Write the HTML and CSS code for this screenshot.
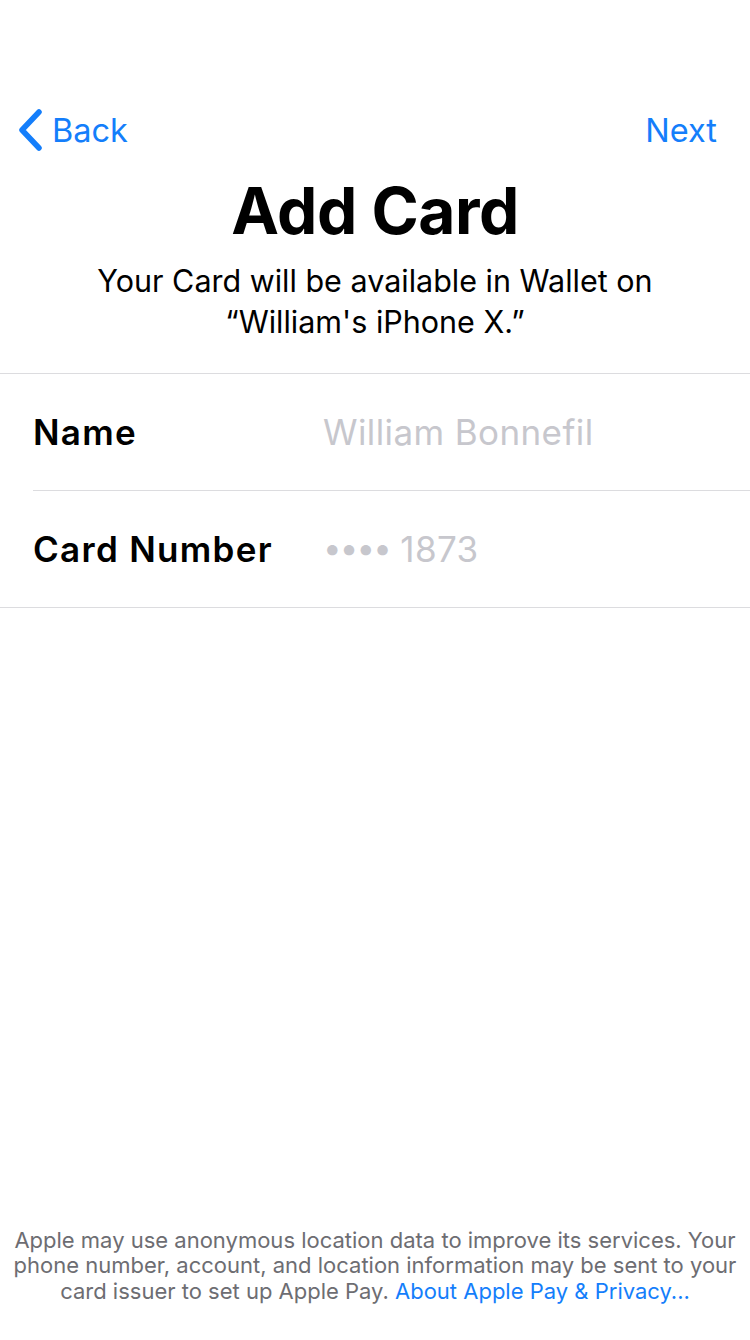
FILE: index.html
```html
<!DOCTYPE html>
<html>
<head>
<meta charset="utf-8">
<link rel="stylesheet" href="styles.css">
</head>
<body>
<div class="screen">
  <header class="nav">
    <a class="nav-back">
      <svg class="chevron" width="26" height="42" viewBox="0 0 26 42"><path d="M22 3 L5 21 L22 39" fill="none" stroke="#147EFB" stroke-width="5.5" stroke-linecap="round" stroke-linejoin="round"/></svg>
      <span>Back</span>
    </a>
    <a class="nav-next">Next</a>
  </header>
  <h1 class="title">Add Card</h1>
  <p class="subtitle">Your Card will be available in Wallet on<br>“William's iPhone X.”</p>
  <div class="form">
    <div class="row">
      <div class="label">Name</div>
      <div class="value">William Bonnefil</div>
    </div>
    <div class="row">
      <div class="label">Card Number</div>
      <div class="value"><span class="dots">••••</span> 1873</div>
    </div>
  </div>
  <div class="spacer"></div>
  <footer class="footer">Apple may use anonymous location data to improve its services. Your phone number, account, and location information may be sent to your card issuer to set up Apple Pay. <a class="link">About Apple Pay &amp; Privacy...</a></footer>
</div>
</body>
</html>
```
FILE: styles.css
```css
html, body {
  margin: 0;
  padding: 0;
  background: #fff;
}
body {
  font-family: Inter, Roboto, "Liberation Sans", sans-serif;
  color: #000;
}
.screen {
  width: 750px;
  height: 1340px;
  display: flex;
  flex-direction: column;
}
.nav {
  display: flex;
  justify-content: space-between;
  align-items: center;
  height: 60px;
  margin-top: 100px;
  padding: 0 33px 0 17px;
}
.nav-back {
  display: flex;
  align-items: center;
  gap: 9px;
  color: #147EFB;
  font-size: 32.5px;
}
.nav-next {
  color: #147EFB;
  font-size: 32.5px;
}
.title {
  margin: 9px 0 0;
  text-align: center;
  font-size: 64px;
  font-weight: 700;
  letter-spacing: -0.5px;
  line-height: 84px;
}
.subtitle {
  margin: 7px 0 0;
  text-align: center;
  font-size: 30.5px;
  line-height: 41px;
}
.form {
  margin-top: 31px;
  border-top: 1.5px solid #DCDCDF;
  border-bottom: 1.5px solid #DCDCDF;
}
.row {
  display: flex;
  align-items: center;
  height: 116px;
  margin-left: 33px;
}
.row + .row {
  border-top: 1.5px solid #DCDCDF;
}
.label {
  width: 290px;
  font-size: 35px;
  font-weight: 600;
  letter-spacing: 1.3px;
}
.value {
  font-size: 35px;
  letter-spacing: 0.4px;
  color: #C7C7CD;
}
.dots {
  font-size: 33px;
  letter-spacing: -1.8px;
  vertical-align: 2px;
}
.spacer {
  flex: 1;
}
.footer {
  margin-bottom: 36px;
  padding: 0 8px;
  text-align: center;
  font-size: 22px;
  line-height: 25.5px;
  color: #6D6D72;
}
.link {
  color: #147EFB;
}
```
